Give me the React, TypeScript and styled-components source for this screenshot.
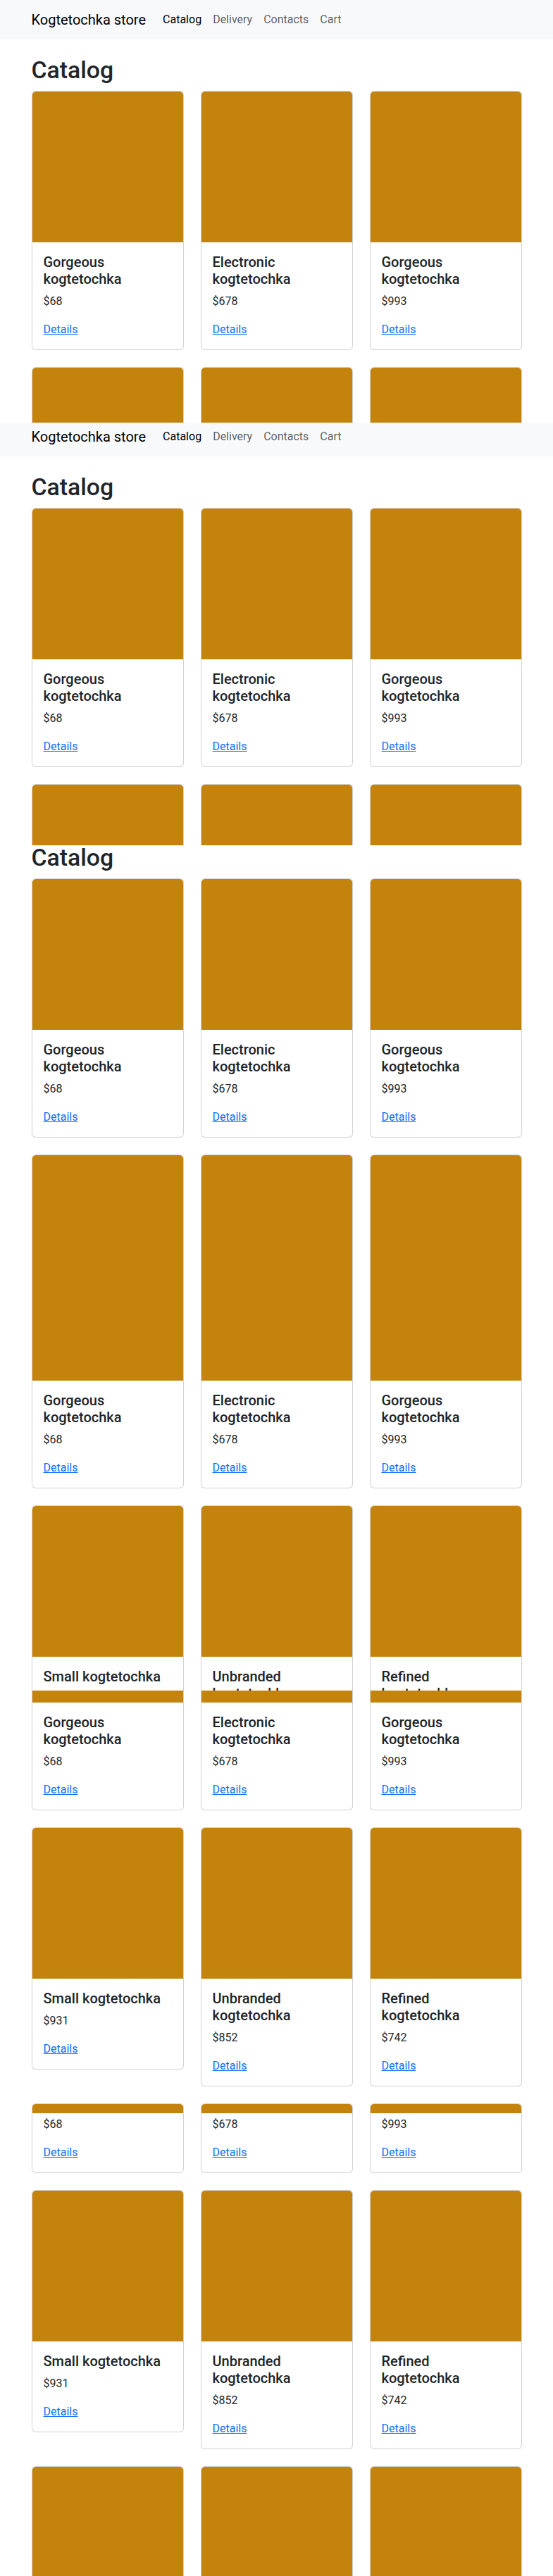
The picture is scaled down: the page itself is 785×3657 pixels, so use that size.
import React from "react";
import styled, { createGlobalStyle } from "styled-components";

const GlobalStyle = createGlobalStyle`
  *, *::before, *::after { box-sizing: border-box; }
  html, body { margin: 0; padding: 0; background: #ffffff; }
  body {
    font-family: Roboto, "Liberation Sans", Arial, sans-serif;
    font-size: 16px;
    line-height: 1.5;
    color: #212529;
    -webkit-font-smoothing: antialiased;
  }
`;

type Product = { name: string; price: number };

const catalog: Product[] = [
  { name: "Gorgeous kogtetochka", price: 68 },
  { name: "Electronic kogtetochka", price: 678 },
  { name: "Gorgeous kogtetochka", price: 993 },
  { name: "Gorgeous kogtetochka", price: 68 },
  { name: "Electronic kogtetochka", price: 678 },
  { name: "Gorgeous kogtetochka", price: 993 },
  { name: "Small kogtetochka", price: 931 },
  { name: "Unbranded kogtetochka", price: 852 },
  { name: "Refined kogtetochka", price: 742 },
  { name: "Small kogtetochka", price: 931 },
  { name: "Unbranded kogtetochka", price: 852 },
  { name: "Refined kogtetochka", price: 742 },
];

/* Each band is one captured viewport of the page, scrolled by `scroll` px */
const bands = [
  { height: 600, scroll: 0 },
  { height: 600, scroll: 8 },
  { height: 600, scroll: 82 },
  { height: 600, scroll: 576 },
  { height: 600, scroll: 718.5 },
  { height: 657, scroll: 804 },
];

const Band = styled.section<{ $height: number }>`
  height: ${(p) => p.$height}px;
  overflow: hidden;
`;

const Page = styled.div<{ $scroll: number }>`
  margin-top: ${(p) => -p.$scroll}px;
`;

const Navbar = styled.nav`
  background: #f8f9fa;
  padding: 8px 0;
`;

const Container = styled.div`
  width: 100%;
  max-width: 720px;
  margin: 0 auto;
  padding: 0 12px;
`;

const NavInner = styled(Container)`
  display: flex;
  align-items: center;
`;

const Brand = styled.a`
  font-size: 20px;
  line-height: 30px;
  padding: 5px 0;
  margin-right: 16px;
  color: #000000;
  text-decoration: none;
  white-space: nowrap;
`;

const NavList = styled.ul`
  display: flex;
  list-style: none;
  margin: 0;
  padding: 0;
`;

const NavLink = styled.a<{ $active?: boolean }>`
  display: block;
  padding: 8px;
  line-height: 24px;
  font-size: 16px;
  text-decoration: none;
  color: ${(p) => (p.$active ? "#000000" : "rgba(0, 0, 0, 0.65)")};
`;

const Main = styled(Container)`
  padding-top: 24px;
  padding-bottom: 24px;
`;

const Heading = styled.h1`
  margin: 0 0 8px;
  font-size: 33.775px;
  line-height: 1.2;
  font-weight: 500;
  color: #212529;
`;

const Grid = styled.div`
  display: grid;
  grid-template-columns: repeat(3, 1fr);
  gap: 24px;
  align-items: start;
`;

const Card = styled.article`
  display: flex;
  flex-direction: column;
  background: #ffffff;
  border: 1px solid rgba(0, 0, 0, 0.175);
  border-radius: 6px;
`;

const CardImage = styled.div`
  width: 100%;
  aspect-ratio: 1 / 1;
  background: #c4830d;
  border-radius: 5px 5px 0 0;
`;

const CardBody = styled.div`
  padding: 16px;
`;

const CardTitle = styled.h5`
  margin: 0 0 8px;
  font-size: 20px;
  line-height: 1.2;
  font-weight: 500;
  color: #212529;
`;

const Price = styled.p`
  margin: 0 0 16px;
  font-size: 16px;
  line-height: 24px;
`;

const DetailsLink = styled.a`
  color: #0d6efd;
  text-decoration: underline;
  font-size: 16px;
  line-height: 24px;
`;

const navItems = ["Catalog", "Delivery", "Contacts", "Cart"];

function StorePage() {
  return (
    <>
      <Navbar>
        <NavInner>
          <Brand href="#">Kogtetochka store</Brand>
          <NavList>
            {navItems.map((item, i) => (
              <li key={item}>
                <NavLink href="#" $active={i === 0}>
                  {item}
                </NavLink>
              </li>
            ))}
          </NavList>
        </NavInner>
      </Navbar>
      <Main>
        <Heading>Catalog</Heading>
        <Grid>
          {catalog.map((p, i) => (
            <Card key={i}>
              <CardImage />
              <CardBody>
                <CardTitle>{p.name}</CardTitle>
                <Price>${p.price}</Price>
                <DetailsLink href="#">Details</DetailsLink>
              </CardBody>
            </Card>
          ))}
        </Grid>
      </Main>
    </>
  );
}

export default function App() {
  return (
    <>
      <GlobalStyle />
      {bands.map((b, i) => (
        <Band key={i} $height={b.height}>
          <Page $scroll={b.scroll}>
            <StorePage />
          </Page>
        </Band>
      ))}
    </>
  );
}
